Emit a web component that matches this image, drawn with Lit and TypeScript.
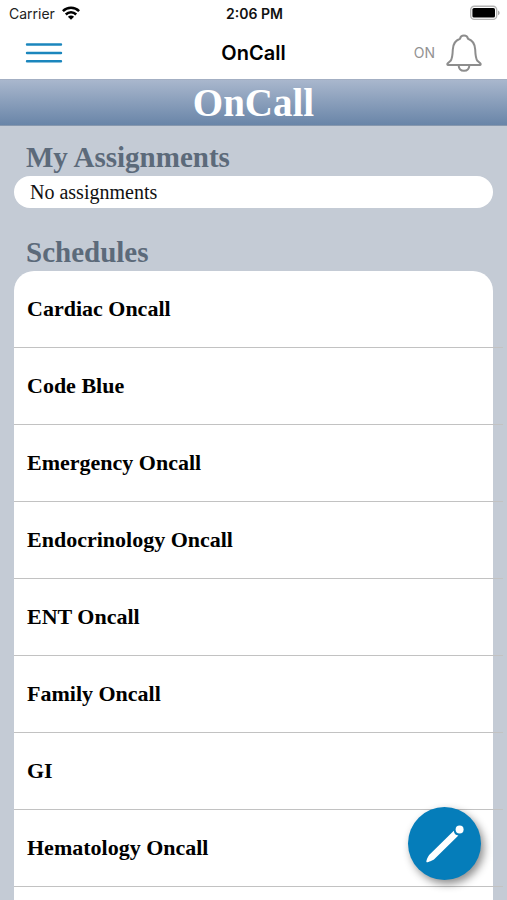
import { LitElement, html, css } from "lit";
import { customElement, property, state } from "lit/decorators.js";

@customElement("status-bar")
class StatusBar extends LitElement {
  static styles = css`
    :host {
      display: grid;
      grid-template-columns: 1fr auto 1fr;
      align-items: center;
      height: 28px;
      padding: 0 7px 0 9px;
      font: 14px/28px Inter, sans-serif;
      color: #222;
    }
    .carrier {
      display: flex;
      align-items: center;
      gap: 7px;
    }
    .time {
      font-weight: 600;
      color: #111;
    }
    .battery {
      justify-self: end;
    }
    svg {
      display: block;
    }
  `;

  render() {
    return html`
      <div class="carrier">
        <span>Carrier</span>
        <svg width="18" height="16" viewBox="0 0 18 16" fill="none" stroke="#000" stroke-width="2.5" aria-label="Wi-Fi">
          <path d="M.9 5.2C5.4.7 12.6.7 17.1 5.2" />
          <path d="M3.8 8.5C6.7 5.6 11.3 5.6 14.2 8.5" />
          <path d="M9 13.8 5.9 10.7C7.6 9 10.4 9 12.1 10.7Z" fill="#000" stroke="none" />
        </svg>
      </div>
      <time class="time">2:06 PM</time>
      <svg class="battery" width="30" height="18" viewBox="0 0 30 18" aria-label="Battery">
        <rect x=".7" y="1.2" width="26" height="13.2" rx="3.6" fill="#fff" stroke="#b4b4b4" stroke-width="1.4" />
        <rect x="2.4" y="3" width="22.6" height="9.6" rx="1.6" fill="#000" />
        <path d="M28 5.6c2.2 1 2.2 3.6 0 4.6Z" fill="#aaa" />
      </svg>
    `;
  }
}

@customElement("nav-bar")
class NavBar extends LitElement {
  @property() heading = "";
  @state() private alertsOn = true;

  static styles = css`
    :host {
      display: grid;
      grid-template-columns: 1fr auto 1fr;
      align-items: center;
      height: 49px;
      padding: 0 25px 2px;
      font-family: Inter, sans-serif;
    }
    button {
      display: flex;
      align-items: center;
      padding: 0;
      border: 0;
      background: none;
      cursor: pointer;
    }
    .menu {
      justify-self: start;
    }
    .title {
      margin: 0;
      font-size: 20px;
      line-height: 28px;
      font-weight: 600;
      color: #000;
    }
    .alerts {
      justify-self: end;
      gap: 11px;
      font: 14px/20px Inter, sans-serif;
      color: #929292;
    }
    svg {
      display: block;
    }
  `;

  render() {
    return html`
      <button class="menu" aria-label="Menu">
        <svg width="38" height="22" viewBox="0 0 38 22" stroke="#1b86bd" stroke-width="2.4" stroke-linecap="round">
          <path d="M2 2.5H36M2 11H36M2 19.2H36" />
        </svg>
      </button>
      <h1 class="title">${this.heading}</h1>
      <button class="alerts" @click=${() => (this.alertsOn = !this.alertsOn)}>
        <span>${this.alertsOn ? "ON" : "OFF"}</span>
        <svg width="36" height="38" viewBox="0 0 36 38" fill="none" stroke="#8d8d8d" stroke-width="2" stroke-linejoin="round">
          <path
            d="M14 4.7C14.4 2.6 15.9 1.4 18 1.4S21.6 2.6 22 4.7C26.9 6.4 29 10.4 29.2 15.5C29.4 21.4 29.7 24.6 31.4 26.8L34.2 29.2C35 30.1 34.8 31 33.8 31H2.2C1.2 31 1 30.1 1.8 29.2L4.6 26.8C6.3 24.6 6.6 21.4 6.8 15.5C7 10.4 9.1 6.4 14 4.7Z"
          />
          <path d="M12.6 31.2C12.8 34.8 15.1 36.8 18 36.8S23.2 34.8 23.4 31.2" />
        </svg>
      </button>
    `;
  }
}

@customElement("app-root")
class AppRoot extends LitElement {
  private schedules = [
    "Cardiac Oncall",
    "Code Blue",
    "Emergency Oncall",
    "Endocrinology Oncall",
    "ENT Oncall",
    "Family Oncall",
    "GI",
    "Hematology Oncall",
  ];

  static styles = css`
    :host {
      display: flex;
      flex-direction: column;
      height: 100vh;
      background: #fff;
      font-family: "Liberation Serif", serif;
    }
    .banner {
      flex: none;
      margin-top: 0;
      border-top: 1px solid #a3afc3;
      border-bottom: 1px solid #8798ae;
      background: linear-gradient(#a9b7cd, #6985a8);
      color: #fff;
      font-size: 39px;
      line-height: 45px;
      font-weight: 700;
      text-align: center;
    }
    main {
      flex: 1;
      min-height: 0;
      overflow-y: auto;
      scrollbar-width: none;
      background: #c4cbd5;
      padding: 13px 14px 0;
    }
    h2 {
      margin: 0;
      padding-left: 12px;
      font-size: 29px;
      line-height: 37px;
      font-weight: 700;
      color: #5c6a7a;
    }
    .empty {
      margin: 0 0 26px;
      padding: 0 16px;
      border-radius: 16px;
      background: #fff;
      color: #111;
      font-size: 20px;
      line-height: 32px;
    }
    ul {
      margin: 0;
      padding: 0 0 20px;
      list-style: none;
      border-radius: 20px 20px 0 0;
      background: #fff;
    }
    li {
      margin-right: -10px;
      border-bottom: 1px solid #c2c2c2;
    }
    .row {
      display: block;
      padding: 0 13px;
      color: #000;
      font-size: 22px;
      line-height: 76px;
      font-weight: 700;
      text-decoration: none;
    }
    .compose {
      position: fixed;
      right: 26px;
      bottom: 20px;
      width: 73px;
      height: 73px;
      padding: 0;
      border: 0;
      border-radius: 50%;
      background: #057dba;
      box-shadow: 3px 4px 8px rgba(0, 0, 0, 0.45);
      cursor: pointer;
    }
    .compose svg {
      display: block;
      margin: auto;
    }
  `;

  render() {
    return html`
      <status-bar></status-bar>
      <nav-bar heading="OnCall"></nav-bar>
      <div class="banner">OnCall</div>
      <main>
        <h2>My Assignments</h2>
        <p class="empty">No assignments</p>
        <h2>Schedules</h2>
        <ul>
          ${this.schedules.map((name) => html`<li><a class="row" href="#">${name}</a></li>`)}
        </ul>
      </main>
      <button class="compose" aria-label="New message">
        <svg width="38" height="38" viewBox="0 0 38 38" fill="#fff">
          <circle cx="33.6" cy="4.6" r="4" />
          <path d="M27.8 5.8C28.2 8.8 29.6 10.2 32.4 10.6L8.2 34.2C7.6 34.8 3.8 36.6 1.6 37.2C.6 37.4.2 36.8.4 36C1 33.6 2.6 30.6 3.4 29.8Z" />
        </svg>
      </button>
    `;
  }
}
